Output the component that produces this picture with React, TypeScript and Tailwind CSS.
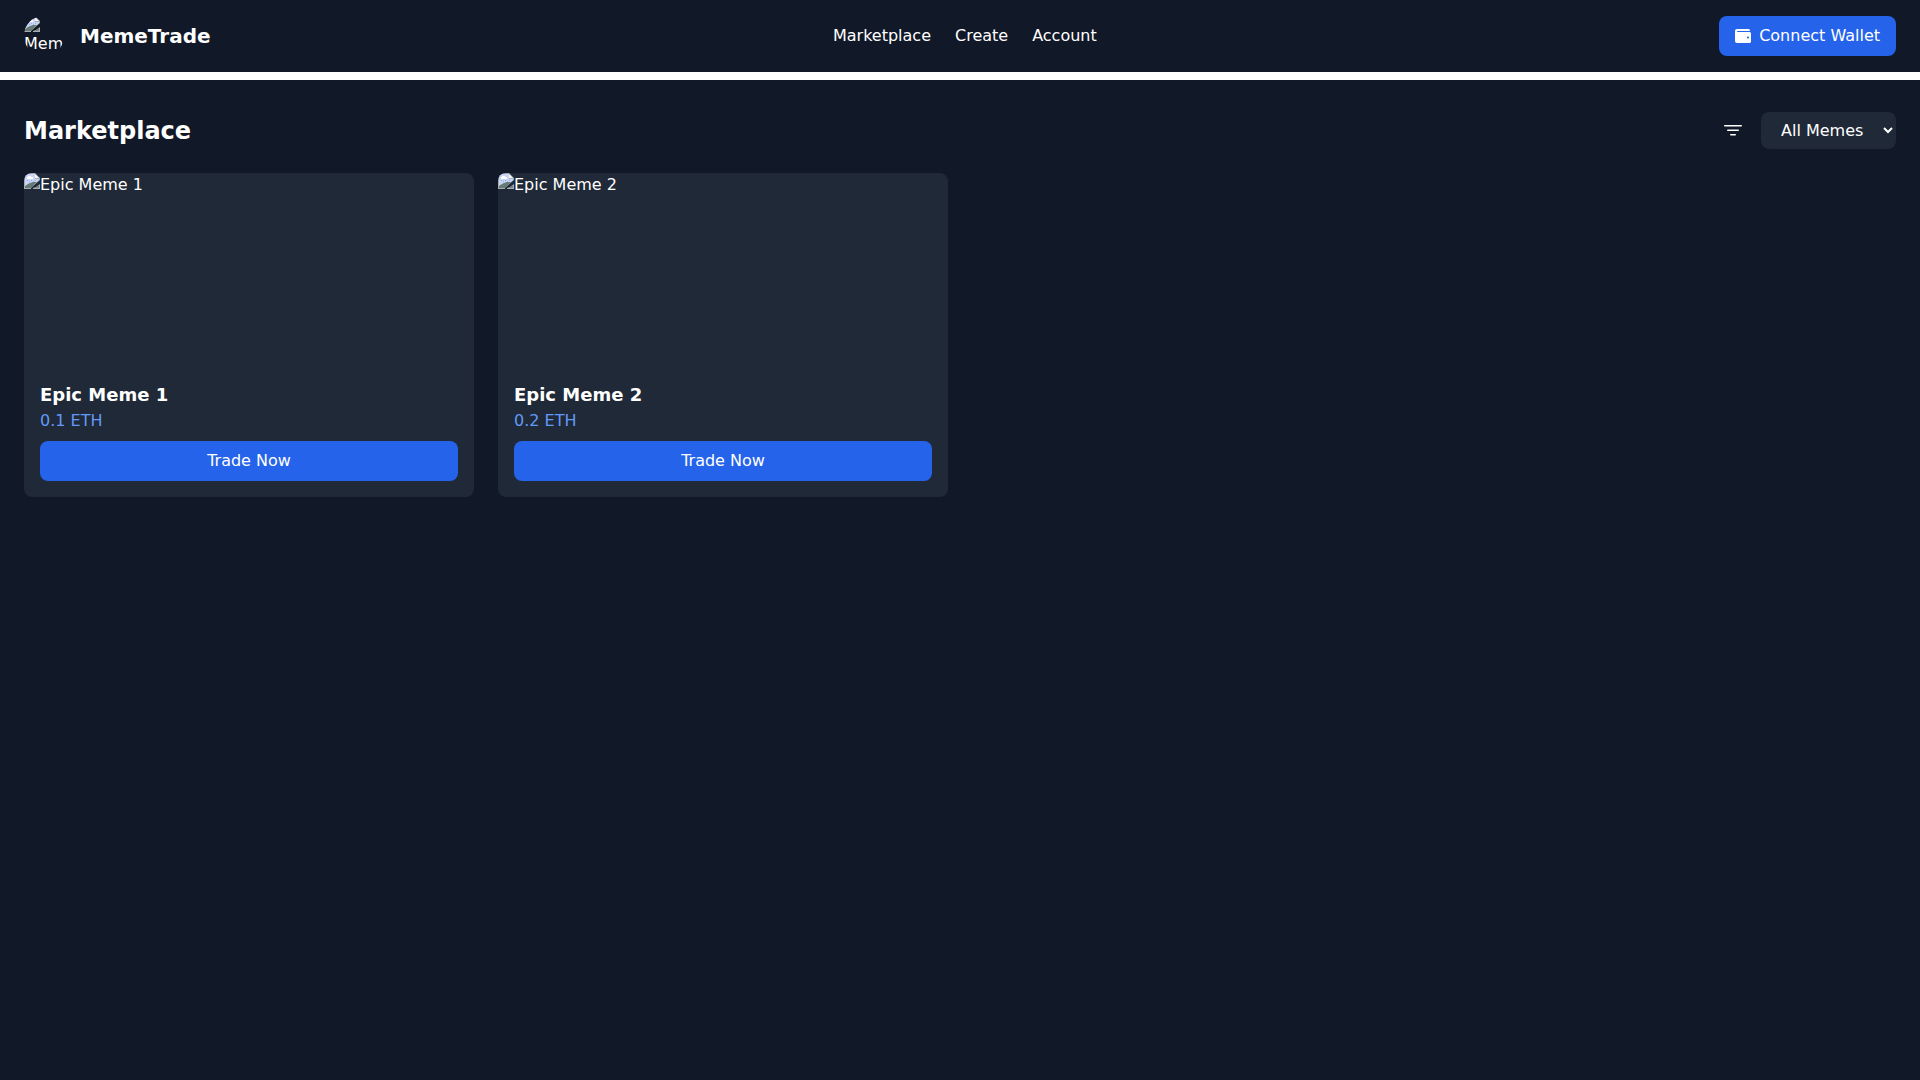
import { BsFilter } from "react-icons/bs";
import { FaWallet } from "react-icons/fa";

const memes = [
  { id: 1, title: "Epic Meme 1", price: "0.1 ETH" },
  { id: 2, title: "Epic Meme 2", price: "0.2 ETH" },
];

function PictureIcon() {
  return (
    <svg className="h-4 w-4 shrink-0" viewBox="0 0 16 16" aria-hidden="true">
      <path d="M0 0h11l5 5v2l-9 8v1H0z" fill="#a9adb0" />
      <path d="M1 1h10v5h4v1l-9 8H1z" fill="#c8d5f4" />
      <path d="M3 6V4h1V3h3v1h2v2z" fill="#fff" />
      <path d="M11 1l4 4h-4z" fill="#f4f6fa" />
      <path d="M3 7h1v1H3zM5 8h1v1H5zM7 7h1v1H7zM9 8h1v1H9zM11 7h1v1h-1z" fill="#8fb0f5" />
      <path d="M1 15v-2l3-2 2-1 3-1h4l-6 6z" fill="#687a74" />
      <path d="M16 11v5H9v-1l3-1z" fill="#a9adb0" />
      <path d="M15 12v3h-4z" fill="#75857f" />
    </svg>
  );
}

function Logo() {
  return (
    <div role="img" aria-label="MemeTrade logo" className="h-10 w-10 overflow-hidden rounded-full">
      <PictureIcon />
      <span className="block">Mem</span>
    </div>
  );
}

export default function App() {
  return (
    <div className="min-h-screen bg-[#111827] font-['DejaVu_Sans',sans-serif] text-base text-white">
      <header className="flex items-center justify-between border-b-8 border-white px-6 py-4">
        <div className="flex items-center gap-4">
          <Logo />
          <span className="text-xl font-bold">MemeTrade</span>
        </div>
        <nav className="flex gap-6">
          <a href="#marketplace">Marketplace</a>
          <a href="#create">Create</a>
          <a href="#account">Account</a>
        </nav>
        <button type="button" className="flex items-center gap-2 rounded-lg bg-[#2563eb] px-4 py-2">
          <FaWallet />
          Connect Wallet
        </button>
      </header>
      <main className="px-6 py-8">
        <div className="mb-6 flex items-center justify-between">
          <h1 className="text-2xl font-bold">Marketplace</h1>
          <div className="flex items-center gap-4">
            <button type="button" aria-label="Filter">
              <BsFilter className="h-6 w-6" />
            </button>
            <select aria-label="Meme category" className="rounded-lg bg-[#1f2937] px-4 py-2 leading-normal">
              <option>All Memes</option>
              <option>Trending</option>
              <option>Newest</option>
            </select>
          </div>
        </div>
        <div className="grid grid-cols-1 gap-6 sm:grid-cols-2 lg:grid-cols-4">
          {memes.map((meme) => (
            <article key={meme.id} className="overflow-hidden rounded-lg bg-[#1f2937]">
              <div className="flex h-48 items-start">
                <PictureIcon />
                <span>{meme.title}</span>
              </div>
              <div className="p-4">
                <h2 className="text-lg font-bold">{meme.title}</h2>
                <p className="text-[#6399f8]">{meme.price}</p>
                <button type="button" className="mt-2 w-full rounded-lg bg-[#2563eb] py-2">
                  Trade Now
                </button>
              </div>
            </article>
          ))}
        </div>
      </main>
    </div>
  );
}
